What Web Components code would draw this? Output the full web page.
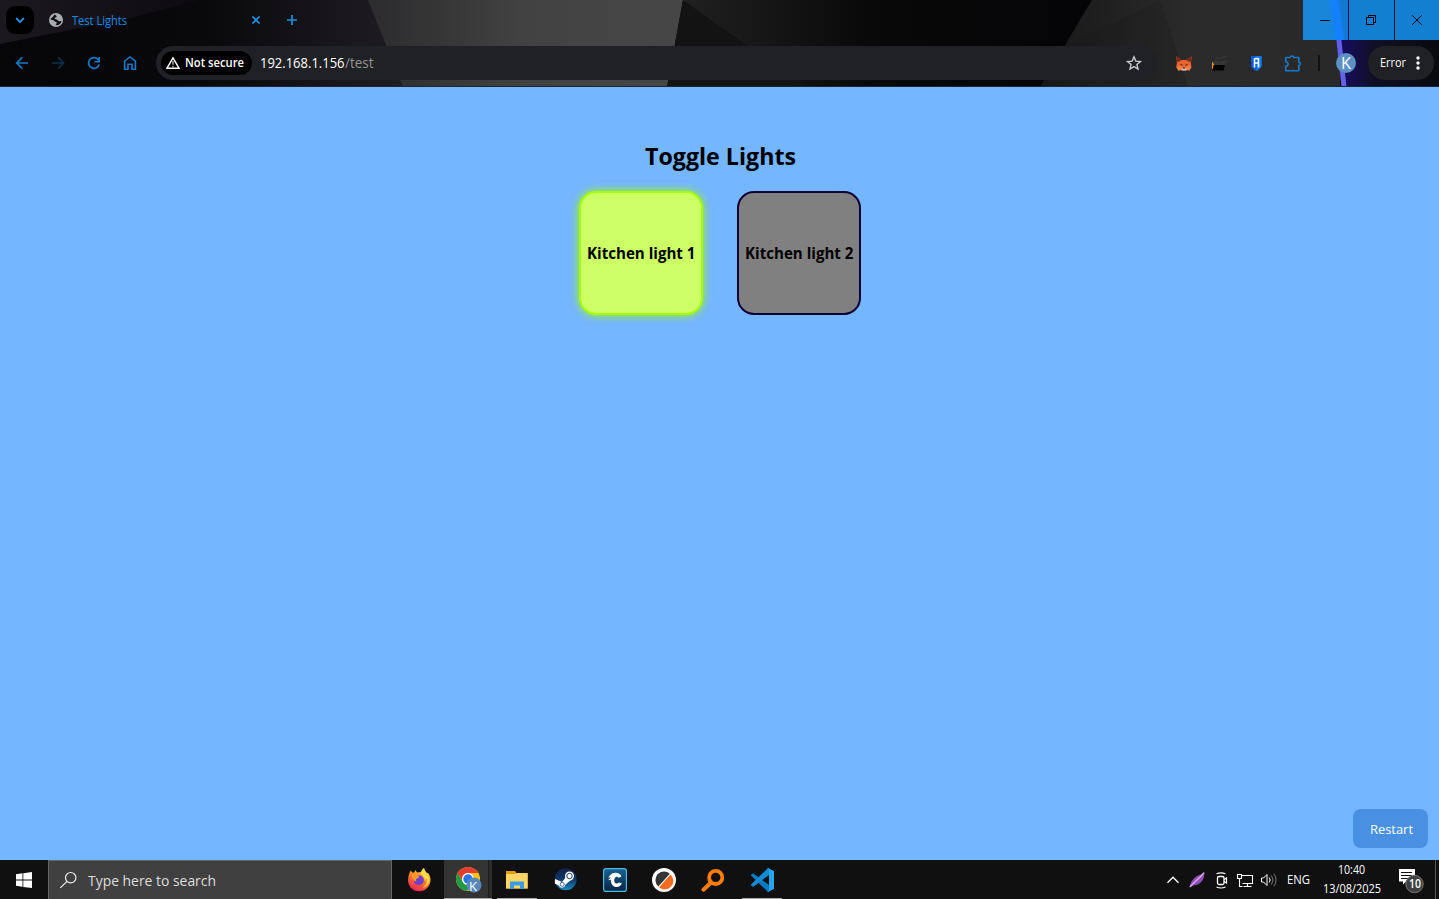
<!DOCTYPE html>
<html lang="en">
<head>
<meta charset="utf-8">
<title>Test Lights</title>
<style>
html,body{margin:0;height:100%;overflow:hidden;background:#74b6ff}
body{font-family:"Open Sans","Noto Sans",sans-serif;color:#000}
</style>
</head>
<body>
<desktop-view></desktop-view>
<script>
const define = (name, html, setup) => customElements.define(name, class extends HTMLElement {
  constructor() {
    super();
    this.attachShadow({mode: 'open'}).innerHTML = html;
  }
  connectedCallback() { if (setup) setup(this, this.shadowRoot); }
});

/* Text run condensed or widened to a set width */
define('fit-text', `<style>
:host{display:block;white-space:nowrap;flex:none}
span{display:inline-block;transform-origin:0 50%}
</style><span><slot></slot></span>`, (el, root) => {
  const w = +el.getAttribute('w');
  const s = root.querySelector('span');
  el.style.width = w + 'px';
  s.style.transform = `scaleX(${w / s.getBoundingClientRect().width})`;
});

const icons = {
chevron:['6 6 28 28','<rect x="6" y="6" width="28" height="28" rx="9" fill="#000"/><path d="M16.200 18.200 20 22 23.800 18.200" fill="none" stroke="#1a9bff" stroke-width="1.700"/>'],
globe:['49 13 14 14','<circle cx="56" cy="20" r="7" fill="#a9adb2"/><path d="M55 14.6c-2 .7-1 2.200-3 3l-1.700 1.700c1.200 1.200 3 .5 4 1.600.8 1 2.500.9 2.500 2l-1.300 2.400c3 .4 5.600-1.500 6-4.300-1.300-.2-2.500.7-3.700-.5-.5-1.600-2.600-.8-3.300-2 .3-1.400 2-.7 2.200-2.300z" fill="#111014"/>'],
close:['250 14 12 12','<path d="M252.400 16.400 259.600 23.600M259.600 16.400 252.400 23.600" stroke="#1590ec" stroke-width="1.600"/>'],
plus:['286 14 12 12','<path d="M287 20h10M292 15v10" stroke="#1590ec" stroke-width="1.700"/>'],
back:['14 55 16 16','<path d="M28 63H17M22.300 57.400 16.700 63l5.600 5.600" fill="none" stroke="#1479c8" stroke-width="1.700"/>'],
forward:['50 55 16 16','<path d="M52 63h11.500M58 57.400 63.500 63 58 68.600" fill="none" stroke="#0d3150" stroke-width="1.700"/>'],
reload:['86 55 16 16','<path d="M99.200 64.500A5.400 5.400 0 1 1 97.900 59.200L99.300 60.900" fill="none" stroke="#1479c8" stroke-width="1.700"/><path d="M99.200 57v4.700h-4.700" fill="none" stroke="#1479c8" stroke-width="1.600"/>'],
home:['122 55 16 16','<path d="M124.600 69.200v-8.100l5.400-4.200 5.400 4.200v8.100h-3.400v-5h-4v5z" fill="none" stroke="#1479c8" stroke-width="1.600"/>'],
warn:['165 55 16 16','<path d="M173 57.800 179.100 68.300H166.900z" fill="none" stroke="#fff" stroke-width="1.400"/><path d="M173 61v3.800M173 65.700v1.300" stroke="#ccc" stroke-width="1.200"/>'],
star:['1126 55 16 16','<path d="M1134 56.800l1.800 4.300 4.700.4-3.600 3 1.100 4.500-4-2.400-4 2.400 1.100-4.500-3.600-3 4.700-.4z" fill="none" stroke="#c6c8cb" stroke-width="1.400"/>'],
fox:['1175 55 18 17','<path d="M1176.300 56.200 1181.500 60h4.800l5.400-3.800-.8 6.500.6 4.600-2 3-3.500-.6h-4.300l-3.500.7-2-3.200.7-4.500z" fill="#e7642d"/><path d="M1176.300 56.200 1181.500 60l-1.500 1.200-2.800.8zM1191.700 56.200 1186.400 60l1.500 1.200 2.900.8z" fill="#76281c"/><path d="M1177 67l4-1 1 4-3.700.4zM1191 67l-4-1-1 4 3.700.4z" fill="#ff8248"/><path d="M1181.500 68.300h5v2.400h-5z" fill="#c9bbb3"/><path d="M1180.500 64.500l2 .8M1187.500 64.500l-2 .8M1183 68h2" stroke="#4a2a20" stroke-width="1.100"/>'],
hat:['1212 54 17 18','<path d="M1212 61.500 1214.500 65 1213 69h-1z" fill="#f7931e"/><path d="M1213.500 65h11.500l-1.500 5.500H1212.500z" fill="#030303"/><path d="M1212.500 60.300c5 1.200 11 .8 16-.8l-3.500 5.500h-10z" fill="#353535"/><path d="M1215.500 59c2-2.500 4 .5 6-1s4-1 5-2" fill="none" stroke="#3f3f3f" stroke-width="1"/>'],
shield:['1250 55 13 17','<path d="M1251.200 56h10.600v9.200c0 2.500-2.500 4-5.300 5.800-2.800-1.800-5.300-3.300-5.300-5.800z" fill="#0878f6"/><path d="M1251.200 65v-9h5.300v15c-3-2-5.300-3.500-5.300-6z" fill="#0757df"/><path d="M1254.500 67.500v-9.300M1258.500 67.500v-9.300M1254.500 63h4M1255 58.600h3" fill="none" stroke="#fff" stroke-width="1.600"/>'],
puzzle:['1284 53 18 18','<path d="M1285.700 56.500h4.500c.2-2 3.200-2 3.400 0h5.200v4.600c2 .2 2 3.200 0 3.400v5.200h-13.100v-4.400c3.200-.3 3.200-4.300 0-4.600z" fill="none" stroke="#1479c8" stroke-width="1.600" stroke-linejoin="round"/>'],
dots:['1412 54 12 18','<g fill="#fff"><circle cx="1418" cy="58" r="1.700"/><circle cx="1418" cy="63" r="1.700"/><circle cx="1418" cy="68" r="1.700"/></g>'],
min:['1316 11 18 18','<path d="M1320 20.500h10" stroke="#000"/>'],
restore:['1362 11 18 18','<path d="M1366.500 17.500h7v7h-7zM1368.500 17v-1.500h7v7h-1.500" fill="none" stroke="#000"/>'],
exit:['1408 11 18 18','<path d="M1412 15.200 1421.800 25M1421.800 15.200 1412 25" stroke="#000"/>'],
win:['14 871 20 20','<path d="M16 874.300l6.500-1v6.300H16zM23.300 873.200l8.700-1.200v7.600h-8.700zM16 880.400h6.500v6.300l-6.500-.9zM23.300 880.400h8.700v7.700l-8.700-1.200z" fill="#fff"/>'],
search:['58 871 20 20','<circle cx="70.700" cy="877.700" r="5.200" fill="none" stroke="#eee" stroke-width="1.200"/><path d="M67 881.400l-6.700 6.500" stroke="#eee" stroke-width="1.200"/>'],
firefox:['406.5 867 24 26','<defs><linearGradient id="a" x1=".8" y1="0" x2=".3" y2="1"><stop stop-color="#fff04a"/><stop offset=".45" stop-color="#ff8a21"/><stop offset="1" stop-color="#f51e5b"/></linearGradient></defs><path d="M410.300 870.600l1.500 2 2-.2 1-2.400 1.800 2.500 4.300-.4c.5-2.200 1.400-3.600 2.700-4.200.1 3 1.900 3.500 3 5.300l.8-.5c2.200 3 3 5.600 2.500 8.900-.8 5.700-5.300 9.700-11.300 9.700-6.700 0-11-5-11-11 0-3.900 1.100-7.500 2.700-9.700z" fill="url(#a)"/><circle cx="418.300" cy="880.300" r="5" fill="#713fc9"/><path d="M411 874.800c3.500-1 6.500-.1 8 2.100l-2.500 1.700c-1.200.5-1.500 1.700-.4 2.600-2.600.5-4.700-2.700-5.100-6.400z" fill="#ff982a"/><path d="M420.500 872.300c-.7 2.500 4.400 4 3.800 8.500 1-1 1.300-2 1.300-3 2 4-.2 8-3.300 9.600 6.500-.7 8.500-8.400 5.200-13-1.700-2.300-3.400-3-4-5.900-1.600.7-2.700 2.200-3 3.800z" fill="#ffd84a"/>'],
chrome:['454 867 28 28','<circle cx="468" cy="880" r="12" fill="#fbc116"/><path d="M457.600 874A12 12 0 0 1 478.400 874H468a6 6 0 0 0-5.200 9z" fill="#e33b2e"/><path d="M457.600 874l5.200 9a6 6 0 0 0 7.700 2.400L467 892a12 12 0 0 1-9.400-18z" fill="#229b48"/><circle cx="468" cy="880" r="6" fill="#fff"/><circle cx="468" cy="880" r="4.700" fill="#2874e8"/><circle cx="474" cy="886" r="7.500" fill="#5788b8"/>'],
folder:['505 869 24 22','<path d="M506 871h9l1.500 2H527.500v15.500H506z" fill="#e69d0b"/><path d="M506 874h10l1-1h10.700v15.500H506z" fill="#ffd565"/><path d="M510 889v-7.500h14v7.500h-4v-3.500h-6v3.500z" fill="#389be3"/>'],
steam:['554 869 24 24','<defs><linearGradient id="s" x1="0" y1="0" x2="0" y2="1"><stop stop-color="#13204b"/><stop offset=".5" stop-color="#103766"/><stop offset="1" stop-color="#168bc5"/></linearGradient></defs><circle cx="565.700" cy="880.300" r="11" fill="url(#s)"/><path d="M555 880l7 3 4-5 5 3-5.500 4.500c-1 4-5.500 4-6.700 1l-4-2z" fill="#fff"/><circle cx="569.500" cy="877" r="4.500" fill="#fff"/><circle cx="569.500" cy="877" r="2.700" fill="#fff" stroke="#16355f" stroke-width="1"/><circle cx="562.200" cy="885.300" r="2" fill="none" stroke="#1a416d" stroke-width=".8"/>'],
capp:['603 868 24 24','<defs><linearGradient id="c" x1="0" y1="0" x2="0" y2="1"><stop stop-color="#176394"/><stop offset="1" stop-color="#082444"/></linearGradient></defs><rect x="603.600" y="868.600" width="22.800" height="22.800" rx="2.500" fill="url(#c)" stroke="#48b9e7" stroke-width="1.200"/><path d="M621.500 876.400c-1.200-2.500-3.500-3.800-6.300-3.600-4 .3-5.500 3-6.800 4.800l2.200-.2c-.7 1.200-2.200 1.800-2.200 2.800l2.500-.4c-.2 4.300 2.200 7.200 5.700 7.300 2.500 0 4.500-1.500 5.200-3.800l-3-.7c-1 1.300-3.200 1.300-4.200-.3-.9-1.700-.4-4.200 1.200-5.300 1.300-.7 2.100-.2 2.900.8z" fill="#fff"/>'],
slicer:['651 867 26 26','<circle cx="664" cy="880" r="12" fill="#fff"/><path d="M658.300 886.500A8.300 8.300 0 0 1 669.800 873.700z" fill="#333436"/><path d="M670.500 874.500A8.300 8.300 0 0 1 659.100 887.200z" fill="#f46b20"/>'],
glass:['701 868 24 25','<circle cx="715.700" cy="877.400" r="6.600" fill="none" stroke="#ff7c08" stroke-width="3.800"/><path d="M710.600 883 703.500 889.700" stroke="#ff7c08" stroke-width="4" stroke-linecap="round"/>'],
code:['750 867 25 26','<path d="M751 875.200l2.200-1.500L770 886.300v4.200l-2 1z" fill="#087bc5" stroke="#087bc5" stroke-width=".8"/><path d="M751 884.900l2.200 1.500L770 873.800v-4.300l-2-1z" fill="#118bd3" stroke="#118bd3" stroke-width=".8"/><path d="M768 868.300l6 2.800v17.800l-6 2.800-1-1c1.500.5 2-.1 2-1.200v-19c0-1.200-.6-1.500-2-1.200z" fill="#25a6f1"/>'],
up:['1166 873 14 14','<path d="M1167.500 882.700l5.500-5.500 5.500 5.500" fill="none" stroke="#fff" stroke-width="1.300"/>'],
feather:['1188 871 18 18','<path d="M1189.500 887.500c1-5 3-8.500 7-11.200 3.200-2 5.800-1.500 7.800-4 .3 6-2.300 11-7.800 12.700-2.500.7-4.500.2-7 2.500z" fill="#8f4db7"/><path d="M1190 887c4-5 9-8 14-14.300" stroke="#dda7ed" fill="none" stroke-width="1.400"/>'],
meet:['1213 871 16 18','<rect x="1217.500" y="876.500" width="6.500" height="8" rx="1.500" fill="none" stroke="#fff" stroke-width="1.300"/><path d="M1224 879.500l2.500-1.500v5l-2.500-1.500M1216.500 873.800q4.500-2 9 0M1216.500 887q4.500 2 9 0" fill="none" stroke="#fff" stroke-width="1.200"/>'],
net:['1236 871 18 18','<path d="M1242 875.500h10.500v8h-10M1247.500 883.500v3M1243.500 886.500h8M1239.500 880v6.500h3M1237.500 874.500h4v4h-4zM1239.500 879v2" fill="none" stroke="#fff" stroke-width="1.100"/>'],
sound:['1260 871 18 18','<path d="M1261.500 878h2l3.500-3.500v11l-3.500-3.500h-2z" fill="none" stroke="#fff"/><path d="M1269.300 877.500q1.700 2.500 0 5" fill="none" stroke="#fff"/><path d="M1271.500 875.500q3 4.500 0 9M1274 873.800q4 6.200 0 12.400" fill="none" stroke="#777"/>'],
note:['1398 870 26 26','<path d="M1399 872h16v12.500h-9l-3 3v-3h-4z" fill="#fff"/><path d="M1401 875.500h11M1401 878.500h11M1401 881.500h7" stroke="#111" stroke-width="1"/><circle cx="1414.500" cy="887" r="8.700" fill="#414141" stroke="#777" stroke-width="1"/>']
};
define('ui-icon', `<style>:host{display:block;flex:none}svg{display:block}</style><div></div>`, (el, root) => {
  const spec = icons[el.getAttribute('name')];
  if (!spec) return;
  const [vb, art] = spec;
  const [, , w, h] = vb.split(' ');
  root.querySelector('div').innerHTML = `<svg width="${w}" height="${h}" viewBox="${vb}">${art}</svg>`;
});

define('chrome-tabs', `<style>
:host{display:flex;height:40px;align-items:center;padding-left:6px;font-size:12px;color:#168ee9}
.tab{display:flex;align-items:center;width:213px;margin:0 24px 0 15px}
fit-text{margin:1px auto 0 9px}
.win{display:flex;align-self:stretch;margin-left:auto;gap:1px}
.win div{width:45px;display:grid;justify-content:start;align-items:center;padding-left:13px;box-sizing:border-box;background:#137fd1}
.win div:first-child{background:linear-gradient(82deg,#1986da 0 60%,#1280ff 68% 79%,#1477d0 84%)}
.win div:last-child{width:44px}
</style>
<ui-icon name="chevron"></ui-icon>
<div class="tab"><ui-icon name="globe"></ui-icon><fit-text w="55">Test Lights</fit-text><ui-icon name="close"></ui-icon></div>
<ui-icon name="plus"></ui-icon>
<div class="win"><div><ui-icon name="min"></ui-icon></div><div><ui-icon name="restore"></ui-icon></div><div><ui-icon name="exit"></ui-icon></div></div>`);

define('address-bar', `<style>
:host{display:flex;align-items:center;box-sizing:border-box;width:1002px;height:34px;border-radius:17px;background:#202124;padding:0 16px 0 5px;color:#fff;font-size:13.800px}
.sec{display:flex;align-items:center;box-sizing:border-box;width:91px;height:24px;padding-left:4px;border-radius:12px;background:#000;font-size:12px;font-weight:600;gap:4px;margin-right:8px}
fit-text{margin-top:-2px}
.sec fit-text{margin-top:-1px}
.path{color:#929397;margin-right:auto}
</style><div class="sec"><ui-icon name="warn"></ui-icon><fit-text w="59">Not secure</fit-text></div>
<fit-text w="84.5">192.168.1.156</fit-text><fit-text class="path" w="28.5">/test</fit-text><ui-icon name="star"></ui-icon>`);

define('chrome-toolbar', `<style>
:host{display:flex;height:46px;align-items:center;color:#fff;font-size:12px}
.nav{display:flex;gap:20px;padding:0 18px 0 14px}
.ext{display:flex;align-items:center;width:127px;margin-left:17px}
.ext ui-icon+ui-icon{margin-left:19px}
.ext ui-icon:nth-child(n+3){margin-left:21px}
.sep{width:2px;height:16px;background:#101010;margin:0 16px}
.user{width:20px;height:20px;border-radius:50%;background:#5b91c5;display:grid;place-items:center;font-size:16px;line-height:20px}
.menu{display:flex;align-items:center;justify-content:space-between;box-sizing:border-box;width:66px;height:34px;border-radius:17px;background:#202124;padding:0 10px 0 12px;margin-left:12px}
.menu fit-text{margin-top:-1px}
</style>
<div class="nav"><ui-icon name="back"></ui-icon><ui-icon name="forward"></ui-icon><ui-icon name="reload"></ui-icon><ui-icon name="home"></ui-icon></div>
<address-bar></address-bar>
<div class="ext"><ui-icon name="fox"></ui-icon><ui-icon name="hat"></ui-icon><ui-icon name="shield"></ui-icon><ui-icon name="puzzle"></ui-icon></div>
<div class="sep"></div><div class="user"><fit-text w="10">K</fit-text></div>
<div class="menu"><fit-text w="26">Error</fit-text><ui-icon name="dots"></ui-icon></div>`);

define('browser-frame', `<style>
:host{display:block;position:relative;height:87px;overflow:hidden;background:#080709;isolation:isolate}
.art{position:absolute;inset:0;z-index:-1}
</style>
<svg class="art" width="1439" height="87" viewBox="0 0 1439 87">
<defs>
<linearGradient id="l0"><stop stop-color="#1b191d"/><stop offset="1" stop-color="#0d0b10"/></linearGradient>
<linearGradient id="l1"><stop stop-color="#060608"/><stop offset=".5" stop-color="#09080b"/><stop offset="1" stop-color="#201e22"/></linearGradient>
<linearGradient id="l2"><stop stop-color="#2c2b2d"/><stop offset=".5" stop-color="#424242"/><stop offset="1" stop-color="#464646"/></linearGradient>
<linearGradient id="l3"><stop stop-color="#202020"/><stop offset=".45" stop-color="#090909"/><stop offset="1" stop-color="#040306"/></linearGradient>
<linearGradient id="l4"><stop stop-color="#171717"/><stop offset=".5" stop-color="#2b2b2b"/><stop offset="1" stop-color="#292929"/></linearGradient>
<linearGradient id="l5"><stop stop-color="#170c72"/><stop offset=".4" stop-color="#110f25"/><stop offset="1" stop-color="#09090e"/></linearGradient>
</defs>
<path d="M0 0H410V87H0z" fill="url(#l1)"/>
<path d="M0 0H198L130 18 0 44z" fill="url(#l0)"/>
<path d="M368 0H683L667 87H403z" fill="url(#l2)"/>
<path d="M683 0H1100V87H667z" fill="#131313"/>
<path d="M683 0H1092L1045 87H806z" fill="url(#l3)"/>
<path d="M1092 0H1340V87H1040z" fill="url(#l4)"/>
<path d="M1160 0 1188 87H1110L1066 46z" fill="#171717" opacity=".25"/>
<path d="M1331 0H1439V87H1342z" fill="url(#l5)"/>
<path d="M1332 0h5l9.500 87h-5z" fill="#6260e8"/>
<path d="M0 86.500H1439" stroke="#182838"/>
</svg>
<chrome-tabs></chrome-tabs><chrome-toolbar></chrome-toolbar>`);

define('light-toggle', `<style>
:host{display:grid;place-items:center;box-sizing:border-box;width:124px;height:124px;border:2px solid #0f0038;border-radius:17px;background:#808080;font-weight:700;font-size:15.5px}
:host([on]){background:#ccff66;border-color:#a6ff00;box-shadow:0 0 10px #a6ff00}
fit-text{padding-left:1px}
</style><fit-text w="108.5"><slot></slot></fit-text>`);

define('lights-page', `<style>
:host{display:flex;flex-direction:column;align-items:center;flex:1;background:#74b6ff}
h2{margin:52px 0 0;font-size:23.300px;line-height:34px;padding-left:1px}
.row{display:flex;gap:34px;margin-top:18px}
button{margin:auto 11px 12px auto;width:75px;height:39px;border:0;border-radius:8px;background:#4a90e2;color:#fff;font:13.200px "Open Sans",sans-serif;display:grid;place-items:center;padding:0 0 0 1px}
</style><h2><fit-text w="151">Toggle Lights</fit-text></h2>
<div class="row"><light-toggle on>Kitchen light 1</light-toggle><light-toggle>Kitchen light 2</light-toggle></div>
<button><fit-text w="43">Restart</fit-text></button>`);

define('task-button', `<style>
:host{display:grid;place-items:center;position:relative;width:49px;height:39px;padding:1px 0 0 1px;box-sizing:border-box}
:host([open])::after{content:"";position:absolute;left:5px;right:4px;bottom:0;height:1px;background:#aaa}
:host([active]){background:linear-gradient(90deg,#111 0 1px,#333 1px 45px,#1b1b1b 45px 46px,#2b2b2b 46px)}
:host([active])::after{left:1px;right:0}
.tag{position:absolute;left:26px;top:16px;color:#fff;font-size:13.500px;line-height:20px}
</style><ui-icon></ui-icon><div class="tag"><slot></slot></div>`, (el, root) => {
  const i = document.createElement('ui-icon');
  i.setAttribute('name', el.getAttribute('icon'));
  root.querySelector('ui-icon').replaceWith(i);
});

define('task-bar', `<style>
:host{display:flex;height:39px;background:#101010;color:#fff;font-size:12px}
.start{width:48px;display:grid;place-items:center;padding-top:2px;box-sizing:border-box}
.search{display:flex;align-items:center;box-sizing:border-box;width:344px;border:1px solid #666;border-bottom:0;background:#404040;color:#dedede;font-size:14.800px;padding:1px 0 0 9px;margin-right:2px}
.search fit-text{margin:-2px 0 0 10px}
.tray{display:flex;align-items:center;margin-left:auto}
.tray ui-icon{margin-top:1px}
.clock{display:flex;flex-direction:column;align-items:center;width:58px;line-height:18px;margin:0 17px 0 13px}
.clock fit-text:first-child{margin:-1px 2px 1px 0}
.note{position:relative}
.badge{position:absolute;left:10.500px;top:9px;line-height:18px;font-weight:600}
.edge{width:1px;height:39px;background:#555;margin:0 3px 0 11px}
</style>
<div class="start"><ui-icon name="win"></ui-icon></div>
<div class="search"><ui-icon name="search"></ui-icon><fit-text w="128">Type here to search</fit-text></div>
<task-button icon="firefox"></task-button><task-button icon="chrome" open active><fit-text w="8">K</fit-text></task-button><task-button icon="folder" open></task-button><task-button icon="steam"></task-button><task-button icon="capp"></task-button><task-button icon="slicer"></task-button><task-button icon="glass"></task-button><task-button icon="code" open></task-button>
<div class="tray">
<ui-icon name="up"></ui-icon><ui-icon name="feather" style="margin-left:8px"></ui-icon><ui-icon name="meet" style="margin-left:7px"></ui-icon><ui-icon name="net" style="margin-left:7px"></ui-icon><ui-icon name="sound" style="margin-left:6px"></ui-icon>
<fit-text w="23" style="margin-left:9px">ENG</fit-text>
<div class="clock"><fit-text w="27">10:40</fit-text><fit-text w="58">13/08/2025</fit-text></div>
<div class="note"><ui-icon name="note"></ui-icon><fit-text class="badge" w="12">10</fit-text></div><div class="edge"></div>
</div>`);

define('desktop-view', `<style>:host{display:flex;flex-direction:column;width:1439px;height:899px}</style>
<browser-frame></browser-frame><lights-page></lights-page><task-bar></task-bar>`);
</script>
</body>
</html>
